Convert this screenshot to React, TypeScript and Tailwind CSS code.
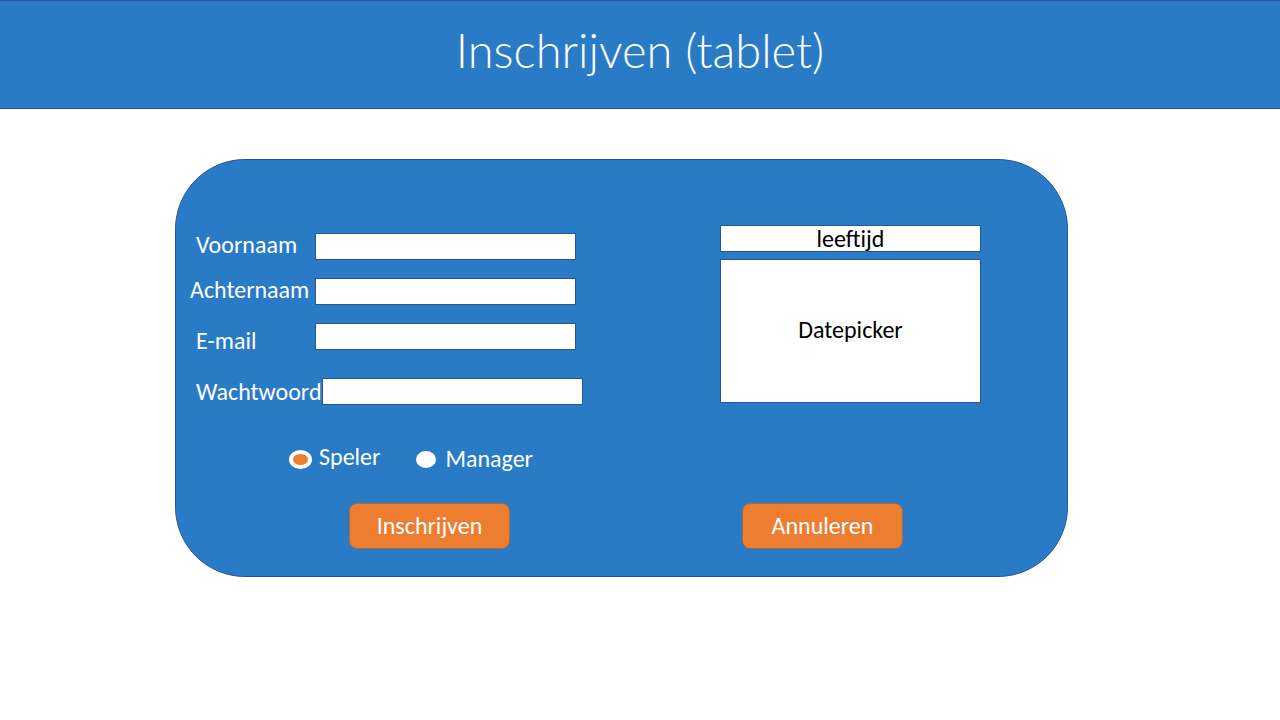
import type { ReactNode } from "react";

const inputClass =
  "h-[27px] w-[261px] shrink-0 border border-[#2b5590] bg-white px-2 text-[20px] text-black outline-none";

type FieldProps = {
  id: string;
  label: string;
  type?: string;
  rowClass?: string;
  labelClass?: string;
};

function Field({ id, label, type = "text", rowClass = "", labelClass = "w-[119px]" }: FieldProps) {
  return (
    <div className={`flex items-start ${rowClass}`}>
      <label htmlFor={id} className={`shrink-0 whitespace-nowrap leading-6 ${labelClass}`}>
        {label}
      </label>
      <input id={id} name={id} type={type} className={inputClass} />
    </div>
  );
}

function ActionButton({ type, children }: { type: "submit" | "reset"; children: ReactNode }) {
  return (
    <button
      type={type}
      className="h-[46px] w-[161px] rounded-lg border border-[#a8683f] bg-[#ed7d31] pb-px text-[24px] text-white"
    >
      {children}
    </button>
  );
}

export default function App() {
  return (
    <div className="min-h-screen bg-white font-['Carlito','Lato',sans-serif]">
      <header className="flex h-[109px] items-center justify-center border-y border-[#24579a] bg-[#2a7bc6] pb-2">
        <h1 className="font-['Ink_Free','Lato',sans-serif] text-[47px] leading-none font-light text-white">
          Inschrijven (tablet)
        </h1>
      </header>

      <main className="pt-[50px] pr-[212px] pb-10 pl-[175px]">
        <form className="rounded-[70px] border border-[#2b5590] bg-[#2a7bc6] pt-[65px] pb-[27px] text-[24px] text-white">
          <div className="flex">
            <div className="w-[544px] shrink-0 pt-2 pl-5">
              <Field id="voornaam" label="Voornaam" />
              <Field
                id="achternaam"
                label="Achternaam"
                rowClass="mt-[18px] -ml-1.5"
                labelClass="w-[125px]"
              />
              <Field id="email" label="E-mail" type="email" rowClass="mt-[18px]" labelClass="w-[119px] pt-1.5" />
              <Field
                id="wachtwoord"
                label="Wachtwoord"
                type="password"
                rowClass="mt-[25px]"
                labelClass="w-[126px] pt-0.5"
              />
            </div>
            <div className="flex w-[261px] flex-col gap-[7px] text-black">
              <input
                type="text"
                name="leeftijd"
                aria-label="leeftijd"
                placeholder="leeftijd"
                className="h-[27px] w-full border border-[#2b5590] bg-white text-center text-[24px] outline-none placeholder:text-black placeholder:opacity-100"
              />
              <div className="flex h-[144px] items-center justify-center border border-[#2b5590] bg-white pb-0.5">
                Datepicker
              </div>
            </div>
          </div>

          <fieldset className="mt-[38px] flex items-center pl-[113px] leading-7">
            <label className="flex items-center gap-[7px]">
              <input
                type="radio"
                name="rol"
                value="speler"
                defaultChecked
                className="h-[19px] w-[23px] appearance-none rounded-[50%] border-4 border-white bg-white checked:bg-[#ed7d31]"
              />
              <span className="pb-1">Speler</span>
            </label>
            <label className="ml-9 flex items-center gap-[9px]">
              <input
                type="radio"
                name="rol"
                value="manager"
                className="h-[17px] w-5 appearance-none rounded-[50%] border-4 border-white bg-white checked:bg-[#ed7d31]"
              />
              <span>Manager</span>
            </label>
          </fieldset>

          <div className="mt-[28px] flex gap-[232px] pl-[173px]">
            <ActionButton type="submit">Inschrijven</ActionButton>
            <ActionButton type="reset">Annuleren</ActionButton>
          </div>
        </form>
      </main>
    </div>
  );
}
